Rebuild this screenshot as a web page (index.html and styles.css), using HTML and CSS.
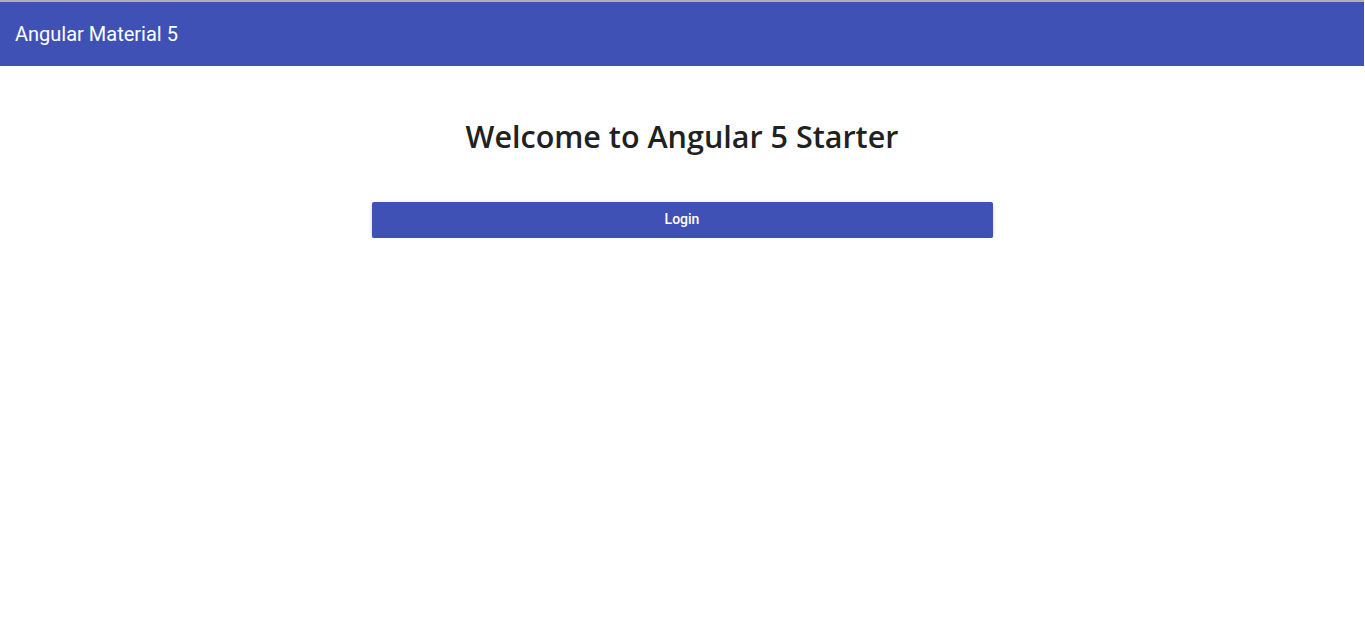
FILE: index.html
```html
<!DOCTYPE html>
<html>
<head>
<meta charset="utf-8">
<link rel="stylesheet" href="styles.css">
</head>
<body>
<div class="topline"></div>
<header class="toolbar"><span class="brand">Angular Material 5</span></header>
<main class="content">
  <h1 class="welcome">Welcome to Angular 5 Starter</h1>
  <button class="login">Login</button>
</main>
</body>
</html>
```
FILE: styles.css
```css
html, body { margin: 0; padding: 0; background: #fff; }
body { font-family: Roboto, "Noto Sans", sans-serif; }
.topline { height: 2px; background: #b0b0b0; margin-right: 1px; }
.toolbar {
  height: 64px;
  background: #3f51b5;
  color: #fff;
  display: flex;
  align-items: center;
  padding: 0 15px;
  margin-right: 1px;
}
.brand { font-size: 20px; font-weight: 400; }
.content {
  display: flex;
  flex-direction: column;
  align-items: center;
  margin-right: 1px;
}
.welcome {
  font-family: "Open Sans", "Noto Sans", sans-serif;
  font-size: 30.5px;
  font-weight: 600;
  color: #212121;
  margin: 49px 0 0;
  line-height: 42px;
}
.login {
  margin-top: 45px;
  width: 621px;
  height: 36px;
  padding: 0 0 2px;
  border: 0;
  border-radius: 2px;
  background: #3f51b5;
  color: #fff;
  font-family: Roboto, sans-serif;
  font-size: 14px;
  font-weight: 500;
  box-shadow: 0 3px 1px -2px rgba(0,0,0,.2), 0 2px 2px 0 rgba(0,0,0,.14), 0 1px 5px 0 rgba(0,0,0,.12);
}
```
